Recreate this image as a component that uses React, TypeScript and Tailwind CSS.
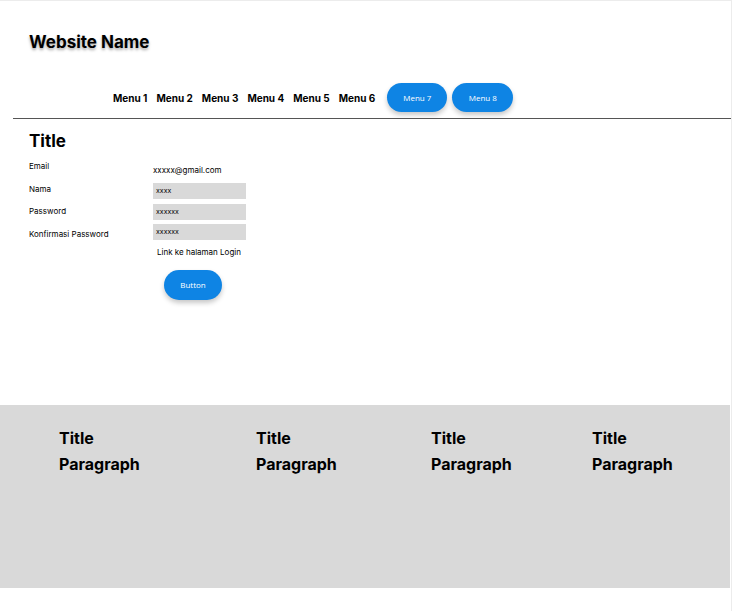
const menus = ["Menu 1", "Menu 2", "Menu 3", "Menu 4", "Menu 5", "Menu 6"];

const fields = [
  { label: "Email", value: "xxxxx@gmail.com", box: false },
  { label: "Nama", value: "xxxx", box: true },
  { label: "Password", value: "xxxxxx", box: true },
  { label: "Konfirmasi Password", value: "xxxxxx", box: true },
];

const footerCols = [
  { left: "pl-[59px] w-[256px]" },
  { left: "w-[175px]" },
  { left: "w-[161px]" },
  { left: "" },
];

function PillButton({ label, className }: { label: string; className?: string }) {
  return (
    <button
      className={`flex items-center justify-center rounded-full bg-[#0e84e4] text-white text-[8px] font-medium shadow-[0_3px_5px_rgba(0,0,0,0.22)] font-['Open_Sans',sans-serif] ${className ?? ""}`}
    >
      {label}
    </button>
  );
}

export default function App() {
  return (
    <div className="flex flex-col w-[732px] h-[611px] bg-white border-t border-r border-[#ececec] overflow-hidden text-black font-['Inter',sans-serif]">
      {/* Header */}
      <div className="pl-[29px] pt-[31px] h-[83px]">
        <h1 className="text-[17px] font-bold leading-[20px] [text-shadow:0_2px_3px_rgba(0,0,0,0.35)]">
          Website Name
        </h1>
      </div>

      {/* Nav */}
      <nav className="flex items-center h-[29px] pl-[113px] mt-[-1px]">
        <div className="flex items-center gap-[9px]">
          {menus.map((m) => (
            <span key={m} className="text-[10px] font-bold leading-none">
              {m}
            </span>
          ))}
        </div>
        <PillButton label="Menu 7" className="ml-[12px] w-[60px] h-[29px]" />
        <PillButton label="Menu 8" className="ml-[5px] w-[61px] h-[29px]" />
      </nav>
      <div className="ml-[13px] mt-[6px] h-px bg-[#555]" />

      {/* Form */}
      <section className="flex-1 pl-[29px] pt-[12px]">
        <h2 className="text-[17px] font-bold leading-[20px]">Title</h2>
        <div className="flex mt-[9px]">
          <div className="flex flex-col w-[124px] text-[8px] leading-[22.5px] mt-[-5px]">
            {fields.map((f) => (
              <span key={f.label}>{f.label}</span>
            ))}
          </div>
          <div className="flex flex-col w-[93px]">
            {fields.map((f) =>
              f.box ? (
                <div
                  key={f.label}
                  className="h-[16px] mb-[4.5px] bg-[#d9d9d9] pl-[3px] text-[7px] leading-[16px]"
                >
                  {f.value}
                </div>
              ) : (
                <div key={f.label} className="h-[23px] text-[8px] leading-[12px] pt-[4px]">
                  {f.value}
                </div>
              )
            )}
            <span className="pl-[4px] mt-[1px] text-[8px] leading-[12px] whitespace-nowrap">
              Link ke halaman Login
            </span>
            <PillButton label="Button" className="ml-[11px] mt-[12px] w-[58px] h-[30px]" />
          </div>
        </div>
      </section>

      {/* Footer */}
      <footer className="flex h-[183px] w-[730px] bg-[#d9d9d9] pt-[21px]">
        {footerCols.map((c, i) => (
          <div key={i} className={`flex flex-col ${c.left}`}>
            <span className="text-[16px] font-bold leading-[24px]">Title</span>
            <span className="text-[16px] font-bold leading-[24px] mt-[2px]">Paragraph</span>
          </div>
        ))}
      </footer>
      <div className="h-[23px]" />
    </div>
  );
}
